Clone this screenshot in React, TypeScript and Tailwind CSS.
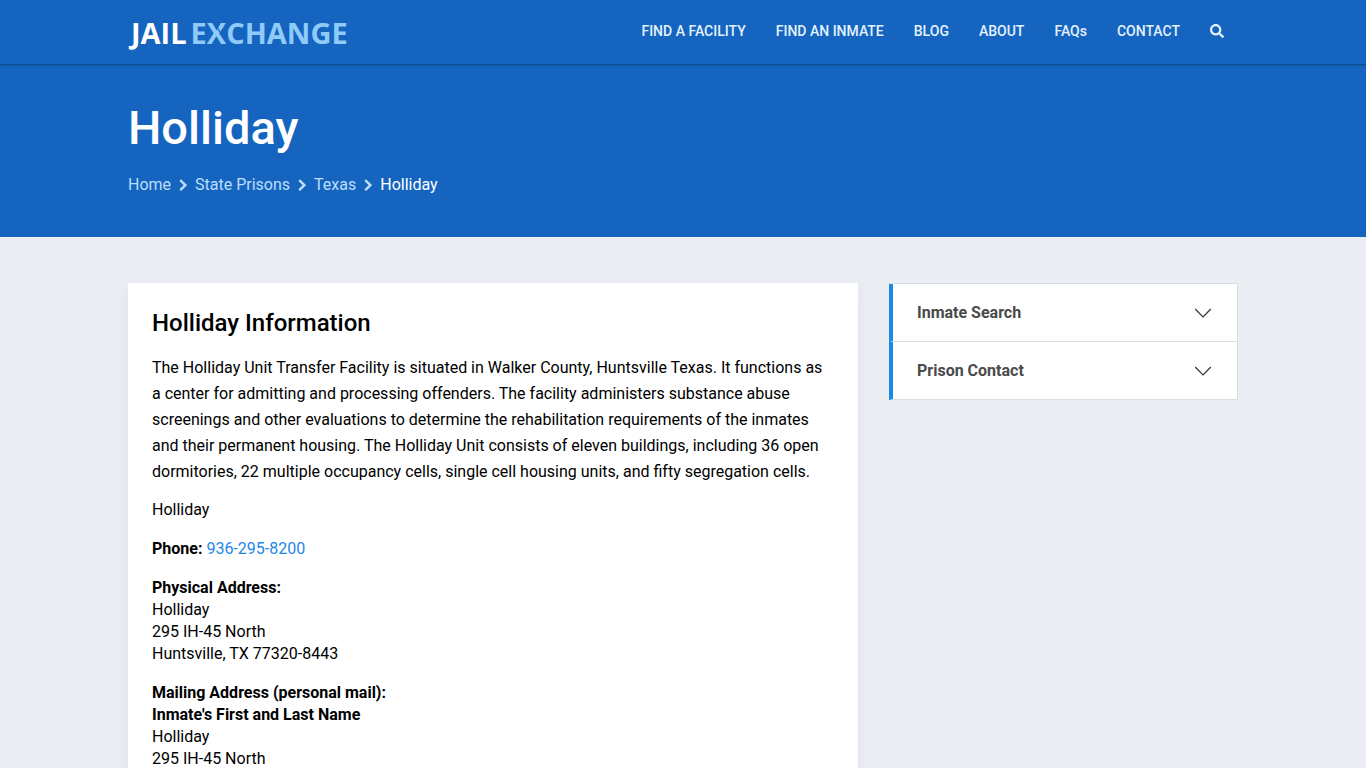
import { useState } from 'react';
import { FaSearch } from 'react-icons/fa';

const navItems = ['FIND A FACILITY', 'FIND AN INMATE', 'BLOG', 'ABOUT', 'FAQs', 'CONTACT'];
const crumbs = ['Home', 'State Prisons', 'Texas'];
const panels = [
  { title: 'Inmate Search', body: 'Search for an inmate held at Holliday.' },
  { title: 'Prison Contact', body: 'Call Holliday at 936-295-8200.' },
];

function CrumbArrow() {
  return (
    <svg className="h-3 w-2" viewBox="0 0 8 12" fill="none" stroke="currentColor" strokeWidth="2.4" aria-hidden="true">
      <path d="M1.2 1.2 6.4 6.2 1.2 11.2" />
    </svg>
  );
}

function Logo() {
  return (
    <a
      href="#"
      className="flex gap-1 pt-0.5 pl-[3px] font-['Open_Sans',sans-serif] text-[29px] leading-10 font-bold text-white"
    >
      <span>JAIL</span>
      <span className="relative text-[#90caf9]">
        EXCHANGE
        {/* Notch that separates the upper-right arm of the X */}
        <svg
          className="absolute top-0 left-4 h-10 w-5"
          viewBox="0 0 20 40"
          fill="none"
          stroke="#1565c0"
          strokeWidth="1.4"
          aria-hidden="true"
        >
          <path d="M8 11 14 20.5" />
        </svg>
      </span>
    </a>
  );
}

function Header() {
  return (
    <header className="relative z-10 border-b border-[#0d4a94] bg-[#1565c0] shadow-[0_1px_2px_rgba(0,0,0,0.15)]">
      <div className="mx-auto flex h-16 max-w-[1110px] items-center justify-between">
        <Logo />
        <nav className="flex items-center gap-[30px] pr-[14px] pb-0.5 text-sm font-medium text-[#e3f2fd]">
          {navItems.map((item) => (
            <a key={item} href="#">{item}</a>
          ))}
          <button type="button" aria-label="Search">
            <FaSearch size={14} />
          </button>
        </nav>
      </div>
    </header>
  );
}

function Hero() {
  return (
    <section className="bg-[#1565c0] pt-[33px] pb-10">
      <div className="mx-auto max-w-[1110px]">
        <h1 className="text-[47px] leading-[60px] font-medium text-white">Holliday</h1>
        <nav aria-label="Breadcrumb" className="mt-[15px] flex items-center gap-2 text-base text-[#bbdefb]">
          {crumbs.map((crumb) => (
            <span key={crumb} className="flex items-center gap-2">
              <a href="#">{crumb}</a>
              <CrumbArrow />
            </span>
          ))}
          <span className="text-white">Holliday</span>
        </nav>
      </div>
    </section>
  );
}

function Panel({ title, body }: { title: string; body: string }) {
  const [open, setOpen] = useState(false);
  return (
    <div className="border-b border-l-4 border-[#dadee0] border-l-[#1e88e5] bg-white">
      <button
        type="button"
        aria-expanded={open}
        onClick={() => setOpen(!open)}
        className="flex h-[57px] w-full items-center justify-between pr-[26px] pl-6 text-left font-bold text-[#4a4a4a]"
      >
        {title}
        <svg className="h-4 w-4" viewBox="0 0 16 16" fill="none" stroke="#333333" strokeWidth="1.2" aria-hidden="true">
          <path d="M0.2 4 8 11.8 15.8 4" />
        </svg>
      </button>
      {open && <p className="px-6 pb-4">{body}</p>}
    </div>
  );
}

export default function App() {
  return (
    <div className="min-h-screen bg-[#eaeef2] font-[Roboto,sans-serif] text-black">
      <Header />
      <Hero />
      <main className="mx-auto grid max-w-[1110px] grid-cols-[730fr_349fr] items-start gap-[31px] pt-[46px] pb-12">
        <article className="bg-white px-6 pt-6 pb-8 shadow-[0_4px_12px_rgba(0,0,0,0.05)]">
          <h2 className="text-2xl leading-8 font-medium">Holliday Information</h2>
          <p className="mt-4 leading-[26px]">
            The Holliday Unit Transfer Facility is situated in Walker County, Huntsville Texas. It functions as a center
            for admitting and processing offenders. The facility administers substance abuse screenings and other
            evaluations to determine the rehabilitation requirements of the inmates and their permanent housing. The
            Holliday Unit consists of eleven buildings, including 36 open dormitories, 22 multiple occupancy cells,
            single cell housing units, and fifty segregation cells.
          </p>
          <p className="mt-3 leading-[26px]">Holliday</p>
          <p className="mt-[13px] leading-[26px]">
            <b className="font-bold">Phone:</b> <a href="tel:936-295-8200" className="text-[#1e88e5]">936-295-8200</a>
          </p>
          <address className="mt-[15px] leading-[22px] not-italic">
            <b className="font-bold">Physical Address:</b><br />
            Holliday<br />
            295 IH-45 North<br />
            Huntsville, TX 77320-8443
          </address>
          <address className="mt-[17px] leading-[22px] not-italic">
            <b className="font-bold">Mailing Address (personal mail):</b><br />
            <b className="font-bold">Inmate's First and Last Name</b><br />
            Holliday<br />
            295 IH-45 North<br />
            Huntsville, TX 77320-8443
          </address>
        </article>
        <aside className="border-t border-r border-[#dadee0]">
          {panels.map((panel) => (
            <Panel key={panel.title} title={panel.title} body={panel.body} />
          ))}
        </aside>
      </main>
    </div>
  );
}
